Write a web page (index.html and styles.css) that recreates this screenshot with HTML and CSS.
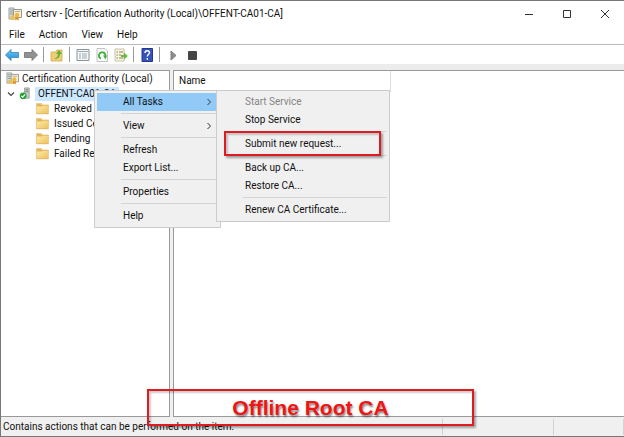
FILE: index.html
```html
<!DOCTYPE html>
<html lang="en">
<head>
<meta charset="utf-8">
<title>certsrv</title>
<link rel="stylesheet" href="styles.css">
</head>
<body>
<svg class="defs" aria-hidden="true">
  <defs>
    <linearGradient id="gold" x1="0" y1="0" x2="1" y2="1"><stop offset="0" stop-color="#ffe9a6"/><stop offset="1" stop-color="#ecc361"/></linearGradient>
    <linearGradient id="blue" x1="0" y1="0" x2="0" y2="1"><stop offset="0" stop-color="#6ccbf5"/><stop offset="1" stop-color="#1b8fd6"/></linearGradient>
    <symbol id="server" viewBox="0 0 14 14">
      <path d="M1 1h5v11H1z" fill="#dfe3e3" stroke="#9a9f9f"/>
      <path d="M2 3h3M2 5h3M2 7h3" stroke="#8b9696"/>
      <path d="M5.500 2.500h8v8h-8z" fill="#f6f1df" stroke="#9c9584"/>
      <path d="M7 4.500h5" stroke="#b3ad9c"/>
      <path d="M2 9l3-1 3 3-2 2H3z" fill="#e2c463"/>
      <path d="M8 9l-1 4.500 2-1 2 1L10 9z" fill="#d9902c"/>
      <circle cx="9" cy="8" r="2.300" fill="#f1b83c"/>
    </symbol>
    <symbol id="folder" viewBox="0 0 13 12">
      <path d="M1 1.500h4l1 1h6v9H1z" fill="#e0b65b"/>
      <path d="M1 4h5l1-1h5v8H1z" fill="url(#gold)"/>
      <path d="M.5 1v10.500h12V2.500h-6L5.500 1z" fill="none" stroke="#dfb860" stroke-width=".7"/>
    </symbol>
  </defs>
</svg>
<div class="window">
  <header class="titlebar">
    <svg class="app-icon" viewBox="0 0 14 14"><use href="#server"/></svg>
    <h1 class="title">certsrv - [Certification Authority (Local)\OFFENT-CA01-CA]</h1>
    <div class="controls">
      <button aria-label="Minimize"><svg viewBox="0 0 10 10"><path d="M1 5.500h8"/></svg></button>
      <button aria-label="Maximize"><svg viewBox="0 0 10 10"><path d="M1.500 1.500h7v7h-7z"/></svg></button>
      <button aria-label="Close"><svg viewBox="0 0 10 10"><path d="M1 1l8 8M9 1l-8 8"/></svg></button>
    </div>
  </header>
  <nav class="menubar">
    <button>File</button><button>Action</button><button>View</button><button>Help</button>
  </nav>
  <div class="toolbar">
    <button aria-label="Back"><svg viewBox="0 0 14 14"><path d="M.5 7L6 1.500v3h7.500v5H6v3z" fill="url(#blue)" stroke="#3b83b5" stroke-width=".8"/></svg></button>
    <button aria-label="Forward"><svg viewBox="0 0 14 14"><path d="M13.500 7L8 1.500v3H.5v5H8v3z" fill="#919191" stroke="#707070" stroke-width=".8"/></svg></button>
    <span class="divider"></span>
    <button aria-label="Up one level"><svg viewBox="0 0 14 14"><path d="M1 4h5l1-2h5v11H1z" fill="#efcd75" stroke="#cfaa55" stroke-width=".8"/><path d="M4 11c3-1 4-3 4-5H6l3-4 3 4h-2c0 3-2 5-6 5z" fill="#5eb52d"/></svg></button>
    <span class="divider"></span>
    <button aria-label="Properties"><svg viewBox="0 0 14 14"><path d="M1 1.500h12v11H1z" fill="#f5f7f8" stroke="#8a9399"/><path d="M2 3.500h10M3 6h2M6 6h5M3 8h2M6 8h5M3 10h2M6 10h5" stroke="#9aa9b4"/></svg></button>
    <button aria-label="Refresh"><svg viewBox="0 0 14 14"><path d="M2 .5h8l2.500 2.500v10.500H2z" fill="#fafafa" stroke="#b3b3b3" stroke-width=".8"/><path d="M6 10.500A3.200 3.200 0 1 1 10.300 8" fill="none" stroke="#3fae3c" stroke-width="1.700"/><path d="M12 7.500H8l2.500 4z" fill="#3fae3c"/></svg></button>
    <button aria-label="Export list"><svg viewBox="0 0 14 14"><path d="M1 1h9v12H1z" fill="#fbf6dc" stroke="#b9b39a" stroke-width=".8"/><path d="M2.500 4H4M5 4h4M2.500 7H4M5 7h2M2.500 10H4M5 10h4" stroke="#857f70"/><path d="M7 7h3V4.500L13.800 8 10 11.500V9H7z" fill="#62bd3a"/></svg></button>
    <span class="divider"></span>
    <button aria-label="Help"><svg viewBox="0 0 14 14"><path d="M2 .5h10.500v13H2z" fill="#3553b8" stroke="#24398d"/><path d="M5 5c0-3 4.500-3 4.500-.4C9.500 6.500 7.300 6.500 7.300 8.500M7.300 10v1.700" fill="none" stroke="#fff" stroke-width="1.400"/></svg></button>
    <span class="divider"></span>
    <button aria-label="Start service"><svg viewBox="0 0 14 14"><path d="M5 3v9l5-4.500z" fill="#8f8f8f" stroke="#7c7c7c"/></svg></button>
    <button aria-label="Stop service"><svg viewBox="0 0 14 14"><rect x="3" y="3" width="9" height="9" rx="1" fill="#454545"/></svg></button>
  </div>
  <main class="workspace">
    <section class="tree">
      <ul>
        <li class="root"><svg viewBox="0 0 14 14"><use href="#server"/></svg><span>Certification Authority (Local)</span></li>
        <li class="ca">
          <svg class="chevron" viewBox="0 0 8 8"><path d="M1 2.500l3 3 3-3"/></svg>
          <svg viewBox="0 0 14 14"><path d="M6 1h5v11H6z" fill="#c8cccd" stroke="#8a9092" stroke-width=".8"/><path d="M7 3h3M7 5h3" stroke="#707779"/><circle cx="4.500" cy="9.500" r="3.700" fill="#27a335"/><path d="M2.500 9.500L4 11l2.500-3" fill="none" stroke="#fff" stroke-width="1.200"/></svg>
          <span class="selected">OFFENT-CA01-CA</span>
        </li>
        <li class="leaf"><svg viewBox="0 0 13 12"><use href="#folder"/></svg><span>Revoked</span></li>
        <li class="leaf"><svg viewBox="0 0 13 12"><use href="#folder"/></svg><span>Issued Certificates</span></li>
        <li class="leaf"><svg viewBox="0 0 13 12"><use href="#folder"/></svg><span>Pending</span></li>
        <li class="leaf"><svg viewBox="0 0 13 12"><use href="#folder"/></svg><span>Failed Requests</span></li>
      </ul>
    </section>
    <section class="list">
      <table><thead><tr><th>Name</th><th></th></tr></thead></table>
    </section>
  </main>
  <footer class="status"><span>Contains actions that can be performed on the item.</span><span></span><span></span></footer>

  <div class="menu context">
    <button class="active">All Tasks<svg viewBox="0 0 8 8"><path d="M2.500 1l3 3-3 3"/></svg></button>
    <hr>
    <button>View<svg viewBox="0 0 8 8"><path d="M2.500 1l3 3-3 3"/></svg></button>
    <hr>
    <button>Refresh</button>
    <button>Export List...</button>
    <hr>
    <button>Properties</button>
    <hr>
    <button>Help</button>
  </div>
  <div class="menu submenu">
    <button disabled>Start Service</button>
    <button>Stop Service</button>
    <hr>
    <button class="marked">Submit new request...</button>
    <hr>
    <button>Back up CA...</button>
    <button>Restore CA...</button>
    <hr>
    <button>Renew CA Certificate...</button>
  </div>
  <div class="caption">Offline Root CA</div>
</div>
</body>
</html>
```
FILE: styles.css
```css
* { box-sizing: border-box; }
body {
  margin: 0;
  font: 10px/14px Roboto, "Open Sans", sans-serif;
  color: #111;
}
button {
  border: 0;
  padding: 0;
  background: none;
  font: inherit;
  color: inherit;
}
svg { display: block; flex: none; }
.defs { position: absolute; width: 0; height: 0; }
.window {
  position: relative;
  display: flex;
  flex-direction: column;
  height: 100vh;
  overflow: hidden;
  border: 1px solid #777;
  border-right: 0;
  background: #fff;
}
.titlebar {
  display: flex;
  align-items: center;
  height: 25px;
  padding-left: 7px;
}
.app-icon { width: 14px; height: 14px; }
.title {
  flex: 1;
  margin: 0 0 0 4px;
  font-size: 10px;
  font-weight: 400;
  white-space: nowrap;
}
.controls { display: flex; }
.controls button { width: 38px; height: 24px; display: grid; place-items: center; }
.controls svg { width: 10px; height: 10px; fill: none; stroke: #333; }
.menubar {
  display: flex;
  gap: 14px;
  height: 19px;
  padding: 0 8px;
  border-bottom: 1px solid #bababa;
}
.toolbar {
  display: flex;
  align-items: center;
  gap: 5px;
  height: 19px;
  padding-left: 4px;
}
.toolbar svg { width: 14px; height: 14px; }
.divider { width: 1px; height: 15px; margin-right: 1px; background: #999; }
.workspace {
  flex: 1;
  display: flex;
  gap: 3px;
  border-top: 6px solid #ececec;
  background: #f0f0f0;
}
.tree {
  width: 169px;
  overflow: hidden;
  border: 1px solid #999;
  border-left: 0;
  background: #fff;
}
.tree ul { margin: 0; padding: 0; list-style: none; white-space: nowrap; }
.tree li { display: flex; align-items: center; gap: 3px; height: 15px; }
.tree li svg { width: 13px; height: 13px; }
.root { padding-left: 5px; }
.ca { padding-left: 6px; }
.tree .ca .chevron { width: 8px; height: 8px; margin-right: 1px; }
.chevron path { fill: none; stroke: #444; stroke-width: 1.2; }
.selected { padding: 0 3px; background: #cce8ff; }
.leaf { padding-left: 35px; }
.leaf span { padding-left: 2px; }
.list {
  flex: 1;
  border: 1px solid #999;
  border-right: 0;
  background: #fff;
}
.list table { width: 100%; border-collapse: collapse; table-layout: fixed; }
.list th {
  height: 20px;
  padding: 0 5px;
  font-weight: 400;
  text-align: left;
}
.list th:first-child {
  width: 216px;
  border-right: 1px solid #ddd;
  border-bottom: 1px solid #ddd;
}
.status {
  display: flex;
  align-items: flex-end;
  height: 19px;
  padding-bottom: 1px;
  background: #f0f0f0;
}
.status span { width: 70px; height: 16px; line-height: 16px; border-right: 1px solid #d2d2d2; }
.status span:first-child { flex: 1; padding-left: 2px; }
.status span:nth-child(2) { width: 111px; }
.menu {
  position: absolute;
  top: 89px;
  padding: 2px;
  border: 1px solid #ccc;
  background: #f0f0f0;
}
.menu button {
  display: flex;
  align-items: center;
  justify-content: space-between;
  width: 100%;
  height: 18px;
  padding: 0 5px 0 26px;
  white-space: nowrap;
}
.menu svg { width: 8px; height: 8px; fill: none; stroke: #333; }
.menu button:disabled { color: #858585; }
.menu hr { height: 1px; margin: 2px 0 3px 24px; border: 0; background: #d4d4d4; }
.context { left: 93px; width: 127px; }
.submenu { left: 215px; width: 174px; }
.menu .active { background: #91c9f7; }
.marked { position: relative; }
.marked::after {
  content: "";
  position: absolute;
  inset: -4px 6px -3px 5px;
  border: 2px solid #e01b1f;
  box-shadow: 2px 2px 2px #0005, inset 2px 2px 2px #0003;
}
.caption {
  position: absolute;
  left: 146px;
  bottom: 10px;
  width: 327px;
  border: 2px solid #e01b1f;
  box-shadow: 2px 2px 2px #0005, inset 2px 2px 2px #0003;
  font: bold 21px/33px "Liberation Sans", sans-serif;
  color: #f01414;
  text-align: center;
  text-shadow: 1px 2px 2px #0007;
}
```
